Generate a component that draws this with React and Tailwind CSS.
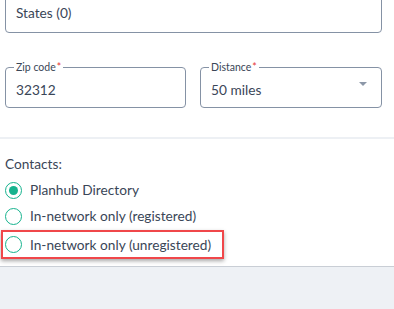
import React from "react";

function Radio({ checked }) {
  return (
    <span className="w-[17px] h-[17px] rounded-full border-[1.5px] border-[#16b38e] flex items-center justify-center shrink-0 bg-white">
      {checked && <span className="w-[9px] h-[9px] rounded-full bg-[#16b38e]" />}
    </span>
  );
}

export default function App() {
  return (
    <div
      className="w-[394px] h-[309px] bg-white overflow-hidden flex flex-col text-[#3a4657]"
      style={{ fontFamily: "Lato, 'Noto Sans', sans-serif" }}
    >
      <div className="ml-[5px] w-[377px] h-[47px] -mt-[14px] border border-[#8592a5] rounded-[4px] flex items-end pb-[10px] pl-[10px] text-[13.7px] leading-[18px] shrink-0">
        States (0)
      </div>

      <div className="flex mt-[34px] ml-[5px] gap-[14px] shrink-0">
        <div className="relative w-[181px] h-[41px] border border-[#8592a5] rounded-[4px] flex items-end pb-[8px] pl-[10px] text-[13.7px] leading-[18px]">
          <span className="absolute -top-[7px] left-[8px] bg-white px-[2px] text-[10.5px] leading-[12px] text-[#3a4657]">
            Zip code<span className="text-[#e53935] ml-[1px]">*</span>
          </span>
          32312
        </div>
        <div className="relative w-[182px] h-[41px] border border-[#8592a5] rounded-[4px] flex items-end justify-between pb-[8px] pl-[10px] pr-[14px] text-[13.7px] leading-[18px]">
          <span className="absolute -top-[7px] left-[8px] bg-white px-[2px] text-[10.5px] leading-[12px] text-[#3a4657]">
            Distance<span className="text-[#e53935] ml-[1px]">*</span>
          </span>
          <span>50 miles</span>
          <svg width="8" height="4" viewBox="0 0 8 4" className="self-center">
            <path d="M0 0 L8 0 L4 4 Z" fill="#8c97a8" />
          </svg>
        </div>
      </div>

      <div className="mt-[29px] h-[2px] bg-[#edf0f4] shrink-0" />

      <div className="pl-[5px] pt-[16px] text-[13.7px] leading-[18px] shrink-0">Contacts:</div>

      <div className="flex flex-col pl-[5px] text-[13.7px] leading-[18px] shrink-0">
        <div className="flex items-center gap-[8px] mt-[8px]">
          <Radio checked />
          <span>Planhub Directory</span>
        </div>
        <div className="flex items-center gap-[8px] mt-[8px]">
          <Radio />
          <span>In-network only (registered)</span>
        </div>
        <div className="-ml-[4px] mt-[5px] w-[223px] h-[29px] border-[2px] border-[#f0474a] shadow-[0_2px_4px_rgba(0,0,0,0.35)] flex items-center pl-[2px] gap-[8px]">
          <Radio />
          <span>In-network only (unregistered)</span>
        </div>
      </div>

      <div className="mt-[7px] flex-1 border-t border-[#c9ced5] bg-[#eef1f5]" />
    </div>
  );
}
